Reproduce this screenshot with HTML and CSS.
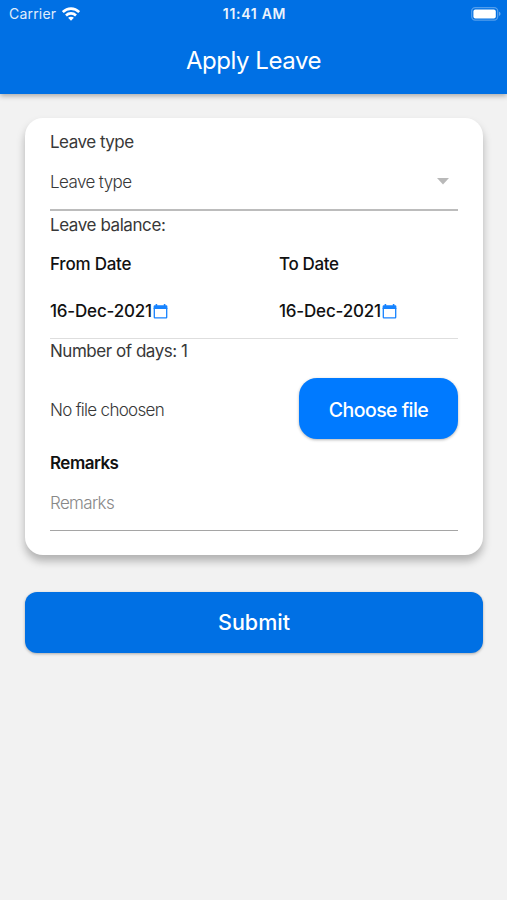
FILE: index.html
```html
<!DOCTYPE html>
<html lang="en">
<head>
<meta charset="utf-8">
<title>Apply Leave</title>
<link rel="stylesheet" href="styles.css">
</head>
<body>
<header class="header">
  <div class="status">
    <div class="carrier"><span class="carrier-name">Carrier</span>
      <svg class="wifi" width="18" height="14" viewBox="0 0 18 14" fill="none" stroke="#fff" stroke-width="2.6"><path d="M.8 5.1C5.4 .4 12.6.4 17.2 5.1M4 8.5C6.8 5.7 11.2 5.7 14 8.5"/><path d="M9 13.8 6.1 10.8C7.7 9.4 10.3 9.4 11.9 10.8Z" fill="#fff" stroke="none"/></svg>
    </div>
    <span class="time">11:41 AM</span>
    <svg class="battery" width="30" height="14" viewBox="0 0 30 14"><rect x=".7" y=".7" width="26" height="12.4" rx="3.5" fill="none" stroke="#fff" stroke-width="1.3" stroke-opacity=".32"/><rect x="2.4" y="2.4" width="22.4" height="9" rx="2" fill="#fff"/><path d="M28 4.7C30 5.4 30 8.2 28 8.9Z" fill="#fff" fill-opacity=".4"/></svg>
  </div>
  <h1 class="title">Apply Leave</h1>
</header>
<main class="main">
  <form class="card">
    <div class="label type-label"><span class="t-type">Leave type</span></div>
    <div class="select"><span class="t-select">Leave type</span><svg width="12" height="7" viewBox="0 0 12 7"><path d="M0 0H12L6 6.5Z" fill="#b9b9b9"/></svg></div>
    <div class="label balance"><span class="t-balance">Leave balance:</span></div>
    <div class="dates">
      <div class="date">
        <div class="date-label"><span class="t-from">From Date</span></div>
        <div class="date-value"><span class="t-date">16-Dec-2021</span><svg width="15" height="15" viewBox="0 0 15 15"><path d="M1.3 4V13.2Q1.3 13.8 1.9 13.8H13.1Q13.7 13.8 13.7 13.2V4" fill="none" stroke="#1683ff" stroke-width="1.3"/><path d="M.6 5V2.4Q.6 1.2 1.8 1.2H2.6V0H4.2V1.2H10.8V0H12.4V1.2H13.2Q14.4 1.2 14.4 2.4V5Z" fill="#1683ff"/></svg></div>
      </div>
      <div class="date">
        <div class="date-label"><span class="t-to">To Date</span></div>
        <div class="date-value"><span class="t-date">16-Dec-2021</span><svg width="15" height="15" viewBox="0 0 15 15"><path d="M1.3 4V13.2Q1.3 13.8 1.9 13.8H13.1Q13.7 13.8 13.7 13.2V4" fill="none" stroke="#1683ff" stroke-width="1.3"/><path d="M.6 5V2.4Q.6 1.2 1.8 1.2H2.6V0H4.2V1.2H10.8V0H12.4V1.2H13.2Q14.4 1.2 14.4 2.4V5Z" fill="#1683ff"/></svg></div>
      </div>
    </div>
    <div class="label days"><span class="t-days">Number of days: 1</span></div>
    <div class="file"><span class="t-file">No file choosen</span><button type="button" class="choose"><span class="t-choose">Choose file</span></button></div>
    <div class="remarks-label"><span class="t-rem">Remarks</span></div>
    <div class="remarks"><span class="t-place">Remarks</span></div>
  </form>
  <button type="button" class="submit"><span class="t-submit">Submit</span></button>
</main>
</body>
</html>
```
FILE: styles.css
```css
* { box-sizing: border-box; }
body {
  margin: 0;
  min-height: 900px;
  background: #f2f2f2;
  font-family: Inter, "Liberation Sans", sans-serif;
  font-size: 17px;
  letter-spacing: -.5px;
  color: #383838;
}
span { white-space: nowrap; }
.header {
  height: 94px;
  background: #0070e4;
  color: #fff;
  box-shadow: 0 2px 5px rgba(0, 0, 0, .3);
}
.status {
  display: grid;
  grid-template-columns: 1fr auto 1fr;
  height: 27px;
  padding: 0 6px 0 9px;
  align-items: center;
}
.carrier { display: flex; align-items: center; gap: 6px; }
.carrier-name { font-size: 14px; letter-spacing: .2px; opacity: .88; }
.time { font-size: 14px; font-weight: 600; letter-spacing: .7px; margin-left: -1px; opacity: .92; }
.battery { justify-self: end; }
.title {
  margin: 0;
  font-size: 24px;
  line-height: 67px;
  font-weight: 400;
  text-align: center;
  letter-spacing: -.45px;
}
.main { padding: 24px 24px 0 25px; }
.header + .main { padding-top: 24px; }
.card {
  height: 437px;
  padding: 8px 25px 0;
  border-radius: 18px;
  background: #fff;
  box-shadow: 0 6px 9px rgba(0, 0, 0, .27);
}
.title { height: 67px; }
.label { display: flex; align-items: center; }
.type-label { height: 32px; }
.select {
  display: flex;
  align-items: center;
  justify-content: space-between;
  height: 53px;
  padding: 0 9px 5px 0;
  border-bottom: 2px solid #bcbcbc;
  font-weight: 300;
}
.balance { height: 29px; padding-bottom: 2px; }
.dates {
  display: grid;
  grid-template-columns: 229px 1fr;
  height: 99px;
  border-bottom: 1px solid #dedede;
  color: #111;
  font-weight: 500;
}
.date-label { display: flex; align-items: center; height: 48px; }
.date-value { display: flex; align-items: center; height: 46px; }
.date-value svg { margin-left: 1px; }
.days { height: 24px; }
.file {
  display: flex;
  align-items: center;
  justify-content: space-between;
  height: 61px;
  margin-top: 15px;
  font-weight: 300;
}
.t-select { padding-top: 2px; letter-spacing: -.6px; }
.t-balance { letter-spacing: -.42px; }
.t-from { letter-spacing: -.22px; }
.t-to { letter-spacing: -.35px; }
.t-date { letter-spacing: -.2px; }
.t-days { letter-spacing: -.46px; }
.t-file { padding-top: 2px; letter-spacing: -.7px; }
.t-rem { letter-spacing: -.52px; }
.t-place { letter-spacing: -.66px; }
.choose, .submit {
  padding: 0;
  border: 0;
  color: #fff;
  font-family: inherit;
  font-weight: 500;
  box-shadow: 0 1px 3px rgba(0, 0, 0, .3);
}
.choose {
  width: 159px;
  height: 61px;
  padding-top: 3px;
  border-radius: 18px;
  background: #007aff;
  font-size: 19.5px;
  letter-spacing: -.55px;
}
.remarks-label {
  display: flex;
  align-items: center;
  height: 48px;
  color: #111;
  font-weight: 600;
}
.remarks {
  display: flex;
  align-items: center;
  height: 44px;
  padding-bottom: 12px;
  border-bottom: 1px solid #a5a5a5;
  color: #888;
  font-weight: 300;
}
.submit {
  display: block;
  width: 100%;
  height: 61px;
  padding-bottom: 1px;
  margin-top: 37px;
  border-radius: 12px;
  background: #0070e4;
  font-size: 21.5px;
}
```
